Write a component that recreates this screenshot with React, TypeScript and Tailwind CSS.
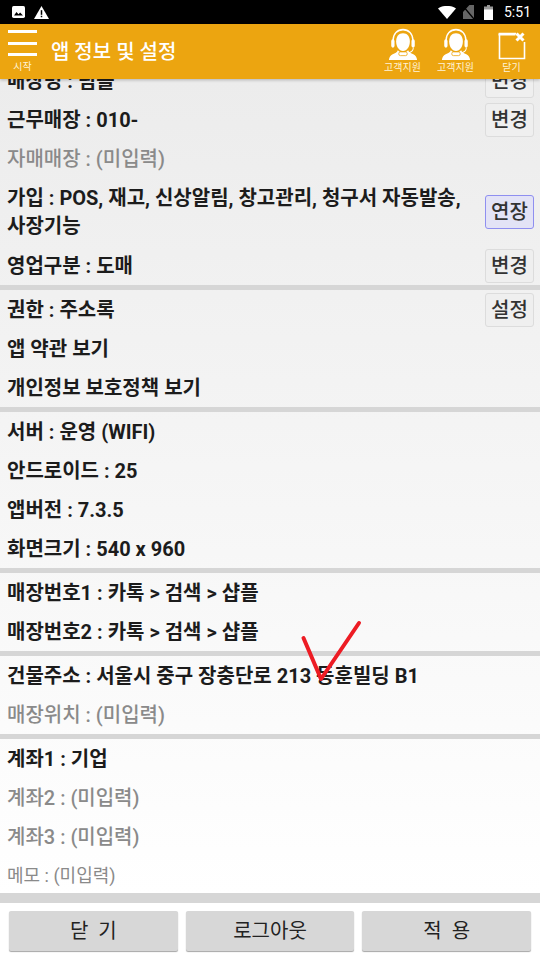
const font = "font-['Roboto','Noto_Sans_CJK_KR',sans-serif]";

function Headset() {
  return (
    <svg width="32" height="34" viewBox="0 0 34 32" fill="none" preserveAspectRatio="none">
      <path d="M17 5c-4.600 0-7.300 3.300-7.300 7.600 0 4.600 3 9 7.300 9s7.300-4.400 7.300-9C24.300 8.300 21.600 5 17 5z" fill="#fff" />
      <path d="M11.500 21c-.8 2-3 3-5.500 3.800C3.500 25.700 2.500 27.500 2 30h30c-.5-2.500-1.500-4.300-4-5.200-2.500-.8-4.700-1.800-5.500-3.800-1.500 1.500-3.500 2.300-5.500 2.300s-4-.8-5.500-2.300z" fill="#fff" />
      <path d="M6.500 14V11.500C6.500 5.500 11 1.500 17 1.500s10.500 4 10.500 10V14" stroke="#fff" strokeWidth="1.500" />
      <rect x="4.500" y="10.500" width="3.500" height="8" rx="1.700" fill="#fff" />
      <rect x="26" y="10.500" width="3.500" height="8" rx="1.700" fill="#fff" />
      <path d="M28 18.500c0 3-2.500 4.500-7 5" stroke="#fff" strokeWidth="1" />
      <rect x="12.500" y="22.500" width="9" height="3.500" rx="1.700" fill="#fff" stroke="#eca510" strokeWidth="0.800" />
    </svg>
  );
}

function HeaderAction({ label, children }: { label: string; children: React.ReactNode }) {
  return (
    <div className="flex w-[53px] flex-col items-center">
      <div className="flex h-[38px] items-end">{children}</div>
      <span className="text-[10px] leading-[12px] text-[#fff3d6]">{label}</span>
    </div>
  );
}

function Row({ text, dim, small, btn, active }: { text: string; dim?: boolean; small?: boolean; btn?: string; active?: boolean }) {
  return (
    <div className="flex h-[39px] items-center justify-between pl-[7px] pr-[6px]">
      <span
        className={
          small
            ? "text-[18px] text-[#8a8a8a]"
            : dim
              ? "text-[20px] font-medium text-[#8a8a8a]"
              : "text-[20px] font-bold text-[#1c1c1c]"
        }
      >
        {text}
      </span>
      {btn && <SmallButton label={btn} active={active} />}
    </div>
  );
}

function SmallButton({ label, active }: { label: string; active?: boolean }) {
  return (
    <span
      className={
        "flex h-[34px] w-[49px] shrink-0 items-center justify-center rounded-[3px] border text-[20px] font-medium text-[#333] " +
        (active ? "border-[#8f8ff0] bg-[#e3e3f6]" : "border-[#dcdcdc] bg-[#efefef]")
      }
    >
      {label}
    </span>
  );
}

function Divider() {
  return <div className="h-[5px] bg-[#d6d6d6]" />;
}

function BottomButton({ label }: { label: string }) {
  return (
    <div className="flex h-[40px] flex-1 items-center justify-center whitespace-pre rounded-[2px] bg-[#d7d7d7] text-[20px] text-[#222] shadow-[0_1px_1px_rgba(0,0,0,0.35)]">
      {label}
    </div>
  );
}

export default function App() {
  return (
    <div className={`flex h-[960px] w-[540px] flex-col overflow-hidden bg-white ${font}`}>
      {/* status bar */}
      <div className="flex h-[24px] shrink-0 items-center justify-between bg-black pl-[12px] pr-[9px] text-white">
        <div className="flex items-center gap-[9px]">
          <svg width="13" height="12" viewBox="0 0 16 14" preserveAspectRatio="none">
            <path d="M2 0h12a2 2 0 0 1 2 2v10a2 2 0 0 1-2 2H2a2 2 0 0 1-2-2V2a2 2 0 0 1 2-2z" fill="#fff" />
            <path d="M2.500 11l3-4 2.500 2.500L10 7.500l3.500 3.500z" fill="#000" />
          </svg>
          <svg width="15" height="13" viewBox="0 0 16 14" preserveAspectRatio="none">
            <path d="M8 0l8 14H0z" fill="#fff" />
            <rect x="7.200" y="4.500" width="1.600" height="5" fill="#000" />
            <rect x="7.200" y="10.500" width="1.600" height="1.600" fill="#000" />
          </svg>
        </div>
        <div className="flex items-center">
          <svg width="18" height="13" viewBox="0 0 18 13" className="mr-[7px]">
            <path d="M0 2.500C5-1 13-1 18 2.500L9 13z" fill="#fff" />
          </svg>
          <svg width="11" height="14" viewBox="0 0 12 14" className="mr-[10px]" preserveAspectRatio="none">
            <path d="M7 0h5v14H0V7z" fill="#666" />
            <path d="M0 1l12 13" stroke="#000" strokeWidth="1.500" />
          </svg>
          <svg width="9" height="15" viewBox="0 0 9 15" className="mr-[11px]">
            <path d="M3 0h3v1.500h3V15H0V1.500h3z" fill="#999" />
            <rect y="4.500" width="9" height="10.500" fill="#fff" />
          </svg>
          <span className="text-[14px] leading-none">5:51</span>
        </div>
      </div>

      {/* title bar */}
      <div className="relative z-10 flex h-[55px] shrink-0 items-start bg-[#eca510] shadow-[0_1px_3px_rgba(0,0,0,0.25)]">
        <div className="flex w-[45px] flex-col items-center pt-[6px]">
          <div className="flex w-[29px] flex-col gap-[8.500px]">
            <div className="h-[3px] bg-white" />
            <div className="h-[3px] bg-white" />
            <div className="h-[3px] bg-white" />
          </div>
          <span className="mt-[5px] text-[10px] leading-[12px] text-[#fff3d6]">시작</span>
        </div>
        <span className="ml-[6px] mt-[15px] text-[20px] font-medium leading-[26px] text-white">앱 정보 및 설정</span>
        <div className="ml-auto flex pr-[2px]">
          <HeaderAction label="고객지원"><Headset /></HeaderAction>
          <HeaderAction label="고객지원"><Headset /></HeaderAction>
          <div className="w-[3px]" />
          <HeaderAction label="닫기">
            <svg width="28" height="28" viewBox="0 0 28 28" fill="none" className="mb-[2px]">
              <path d="M18 1.500H1.500v25h25V10" stroke="#fff" strokeWidth="1.600" />
              <path d="M0.500 2.500h17" stroke="#fff" strokeWidth="2" />
              <path d="M18.500 1.500l7 7M25.500 1.500l-7 7" stroke="#fff" strokeWidth="3" />
            </svg>
          </HeaderAction>
        </div>
      </div>

      {/* settings list */}
      <div className="min-h-0 flex-1 overflow-hidden bg-gradient-to-b from-[#ececec] to-white">
        <div className="mt-[-18px]">
          <Row text="매장명 : 팀플" btn="변경" />
          <Row text="근무매장 : 010-" btn="변경" />
          <Row text="자매매장 : (미입력)" dim />
          <div className="flex h-[68px] items-center justify-between pl-[7px] pr-[6px]">
            <span className="w-[470px] text-[20px] font-bold leading-[28px] text-[#1c1c1c]">
              가입 : POS, 재고, 신상알림, 창고관리, 청구서 자동발송, 사장기능
            </span>
            <SmallButton label="연장" active />
          </div>
          <Row text="영업구분 : 도매" btn="변경" />
          <Divider />
          <Row text="권한 : 주소록" btn="설정" />
          <Row text="앱 약관 보기" />
          <Row text="개인정보 보호정책 보기" />
          <Divider />
          <Row text="서버 : 운영 (WIFI)" />
          <Row text="안드로이드 : 25" />
          <Row text="앱버전 : 7.3.5" />
          <Row text="화면크기 : 540 x 960" />
          <Divider />
          <Row text="매장번호1 : 카톡 > 검색 > 샵플" />
          <Row text="매장번호2 : 카톡 > 검색 > 샵플" />
          <Divider />
          <Row text="건물주소 : 서울시 중구 장충단로 213 동훈빌딩 B1" />
          <Row text="매장위치 : (미입력)" dim />
          <Divider />
          <Row text="계좌1 : 기업" />
          <Row text="계좌2 : (미입력)" dim />
          <Row text="계좌3 : (미입력)" dim />
          <Row text="메모 : (미입력)" small />
        </div>
      </div>

      {/* bottom buttons */}
      <div className="h-[10px] shrink-0 bg-[#d6d6d6]" />
      <div className="flex h-[57px] shrink-0 gap-[8px] bg-white px-[9px] pt-[8px]">
        <BottomButton label="닫  기" />
        <BottomButton label="로그아웃" />
        <BottomButton label="적  용" />
      </div>

      {/* red check mark drawn over the address row */}
      <svg width="64" height="68" viewBox="0 0 64 68" fill="none" className="absolute left-[300px] top-[618px] z-20">
        <path d="M3.500 20L21 61 59 5" stroke="#ed1c24" strokeWidth="4" strokeLinecap="round" strokeLinejoin="round" />
      </svg>
    </div>
  );
}
